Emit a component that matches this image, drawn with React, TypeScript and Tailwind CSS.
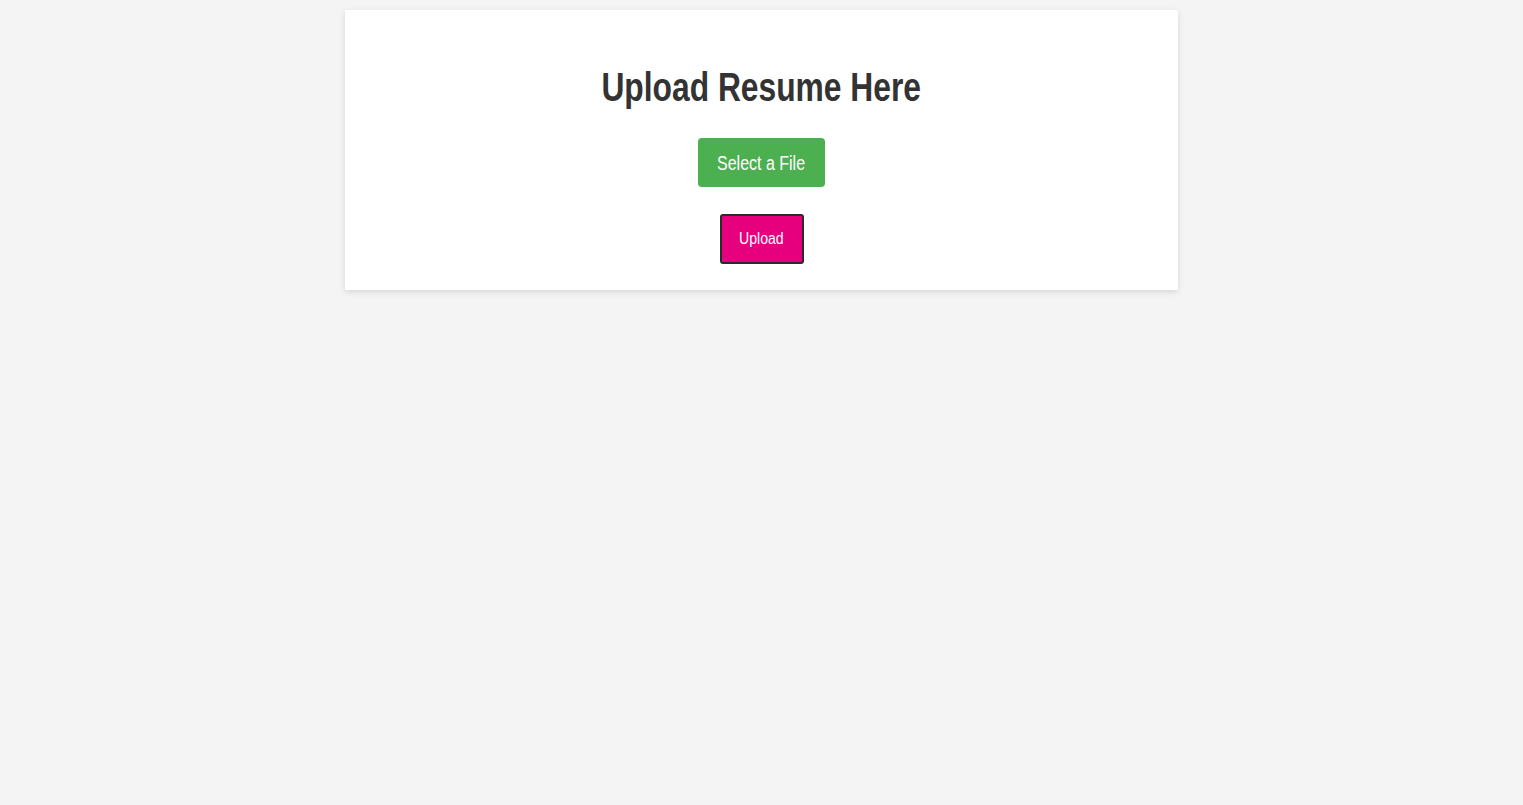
import React from 'react';

export default function App() {
  return (
    <div
      className="min-h-screen bg-[#f4f4f4] pt-[10px]"
      style={{ fontFamily: '"Liberation Sans", Arial, sans-serif' }}
    >
      {/* Kartu upload */}
      <div className="mx-auto w-[833px] h-[280px] bg-white shadow-[0_2px_6px_rgba(0,0,0,0.12)] flex flex-col items-center pt-[52px]">
        <h1 className="text-[41px] leading-[50px] font-bold text-[#333333]">
          <span className="inline-block scale-x-[0.775]">Upload Resume Here</span>
        </h1>

        <label className="mt-[26px] w-[127px] h-[49px] bg-[#4caf50] rounded-[4px] text-white text-[20px] flex items-center justify-center cursor-pointer">
          <span className="inline-block scale-x-[0.8]">Select a File</span>
          <input type="file" className="hidden" />
        </label>

        <button className="mt-[27px] w-[84px] h-[50px] bg-[#e6007e] border-2 border-[#2b2b2b] rounded-[3px] text-white text-[16px] flex items-center justify-center">
          <span className="inline-block scale-x-[0.88]">Upload</span>
        </button>
      </div>
    </div>
  );
}
